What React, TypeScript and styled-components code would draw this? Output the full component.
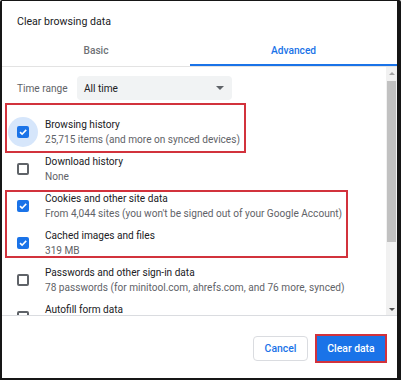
import React from 'react';
import styled, { createGlobalStyle, css } from 'styled-components';

const GlobalStyle = createGlobalStyle`
  html, body {
    margin: 0;
    padding: 0;
    background: #ffffff;
  }
  body {
    font-family: Roboto, 'Liberation Sans', Arial, sans-serif;
    color: #202124;
  }
`;

const Frame = styled.div`
  width: 401px;
  height: 380px;
  box-sizing: border-box;
  border-style: solid;
  border-color: #161616;
  border-width: 1px 4px 2px 2px;
  border-radius: 2px 2px 0 0;
  background: #ffffff;
  overflow: hidden;
`;

const Dialog = styled.div`
  display: flex;
  flex-direction: column;
  height: 100%;
`;

const Header = styled.div`
  height: 35px;
  box-sizing: border-box;
  padding: 13px 0 0 15px;
`;

const Title = styled.h1`
  margin: 0;
  font-size: 10.6px;
  line-height: 16px;
  font-weight: 400;
  color: #202124;
`;

const TabBar = styled.div`
  display: flex;
  height: 31px;
  box-sizing: border-box;
  border-bottom: 1px solid #e3e3e3;
`;

const Tab = styled.div<{ $active?: boolean; $basis?: number }>`
  display: flex;
  align-items: center;
  justify-content: center;
  padding-bottom: 1px;
  font-size: 10.2px;
  font-weight: 500;
  color: #6f7276;
  ${(p) => (p.$basis ? `flex: 0 0 ${p.$basis}px;` : 'flex: 1;')}
  ${(p) =>
    p.$active &&
    css`
      color: #1a73e8;
      box-shadow: inset 0 -2px 0 #1a73e8;
    `}
`;

const Body = styled.div`
  display: flex;
  height: 248px;
`;

const Content = styled.div`
  flex: 1;
  overflow: hidden;
`;

const RangeRow = styled.div`
  display: flex;
  align-items: center;
  padding: 9px 0 0 15px;
`;

const RangeLabel = styled.span`
  width: 60px;
  font-size: 10.1px;
  color: #5f6368;
`;

const Select = styled.div`
  display: flex;
  align-items: center;
  justify-content: space-between;
  width: 155px;
  height: 24px;
  box-sizing: border-box;
  padding: 0 8px 0 7px;
  border-radius: 4px;
  background: #f1f3f4;
  font-size: 10.1px;
  color: #202124;
`;

const Caret = styled.span`
  width: 0;
  height: 0;
  border-left: 4px solid transparent;
  border-right: 4px solid transparent;
  border-top: 4px solid #5f6368;
`;

const Group = styled.div<{ $width: number; $top: number; $bottom: number; $gap?: number }>`
  position: relative;
  margin-top: ${(p) => p.$gap ?? 0}px;
  &::after {
    content: '';
    position: absolute;
    left: 3px;
    top: ${(p) => p.$top}px;
    bottom: ${(p) => p.$bottom}px;
    width: ${(p) => p.$width}px;
    box-sizing: border-box;
    border: 2px solid #d2323c;
    pointer-events: none;
  }
`;

const Rows = styled.div<{ $gap?: number }>`
  margin-top: ${(p) => p.$gap ?? 0}px;
`;

const Row = styled.div`
  display: flex;
  align-items: center;
  height: 37px;
  padding-left: 15px;
`;

const Box = styled.span<{ $checked?: boolean; $focused?: boolean }>`
  position: relative;
  flex: 0 0 12px;
  width: 12px;
  height: 12px;
  box-sizing: border-box;
  border-radius: 2px;
  display: flex;
  align-items: center;
  justify-content: center;
  border: 2px solid #5f6368;
  ${(p) =>
    p.$checked &&
    css`
      border: none;
      background: #1a73e8;
    `}
  ${(p) =>
    p.$focused &&
    css`
      &::before {
        content: '';
        position: absolute;
        left: -9px;
        top: -9px;
        width: 30px;
        height: 30px;
        border-radius: 50%;
        background: #d6e6fb;
        z-index: -1;
      }
    `}
  svg {
    display: block;
  }
`;

const CheckArea = styled.span`
  position: relative;
  z-index: 0;
  display: flex;
`;

const Texts = styled.div`
  margin-left: 16px;
  display: flex;
  flex-direction: column;
`;

const RowTitle = styled.span`
  font-size: 10.1px;
  line-height: 15px;
  color: #202124;
  white-space: nowrap;
`;

const RowSub = styled.span`
  min-height: 15px;
  font-size: 10.1px;
  line-height: 15px;
  color: #5f6368;
  white-space: nowrap;
`;

const Scrollbar = styled.div`
  flex: 0 0 11px;
  display: flex;
  flex-direction: column;
  background: #f1f1f1;
`;

const ArrowCell = styled.div<{ $size: number }>`
  flex: 0 0 ${(p) => p.$size}px;
  display: flex;
  align-items: center;
  justify-content: center;
`;

const Arrow = styled.span<{ $down?: boolean; $muted?: boolean }>`
  width: 0;
  height: 0;
  border-left: 3px solid transparent;
  border-right: 3px solid transparent;
  ${(p) =>
    p.$down
      ? `border-top: 3px solid ${p.$muted ? '#a3a3a3' : '#505050'};`
      : `border-bottom: 3px solid ${p.$muted ? '#a3a3a3' : '#505050'};`}
`;

const Track = styled.div`
  flex: 1;
  padding: 1px 1px 0;
`;

const Thumb = styled.div`
  height: 161px;
  background: #c1c1c1;
`;

const Footer = styled.div`
  flex: 1;
  display: flex;
  justify-content: flex-end;
  align-items: flex-start;
  gap: 9px;
  padding: 20px 12px 0 0;
  border-top: 1px solid #dadce0;
`;

const Button = styled.button<{ $primary?: boolean }>`
  height: 25px;
  box-sizing: border-box;
  font-family: inherit;
  font-size: 10.4px;
  font-weight: 500;
  padding: 0;
  cursor: pointer;
  ${(p) =>
    p.$primary
      ? css`
          width: 68px;
          border: none;
          border-radius: 0;
          background: #1a73e8;
          color: #ffffff;
          box-shadow: 0 0 0 2px #d2323c;
        `
      : css`
          width: 55px;
          border: 1px solid #dadce0;
          border-radius: 4px;
          background: #ffffff;
          color: #1a73e8;
        `}
`;

type Item = { title: string; sub: string; checked: boolean; focused?: boolean };

const Check = ({ checked, focused }: { checked: boolean; focused?: boolean }) => (
  <CheckArea>
    <Box $checked={checked} $focused={focused}>
      {checked && (
        <svg width="10" height="10" viewBox="0 0 10 10">
          <path d="M2 5.2 L4.1 7.2 L8.2 2.9" fill="none" stroke="#ffffff" strokeWidth="1.6" />
        </svg>
      )}
    </Box>
  </CheckArea>
);

const DataRow = ({ item }: { item: Item }) => (
  <Row>
    <Check checked={item.checked} focused={item.focused} />
    <Texts>
      <RowTitle>{item.title}</RowTitle>
      <RowSub>{item.sub}</RowSub>
    </Texts>
  </Row>
);

const browsing: Item = {
  title: 'Browsing history',
  sub: '25,715 items (and more on synced devices)',
  checked: true,
  focused: true,
};
const download: Item = { title: 'Download history', sub: 'None', checked: false };
const cookies: Item = {
  title: 'Cookies and other site data',
  sub: "From 4,044 sites (you won't be signed out of your Google Account)",
  checked: true,
};
const cached: Item = { title: 'Cached images and files', sub: '319 MB', checked: true };
const passwords: Item = {
  title: 'Passwords and other sign-in data',
  sub: '78 passwords (for minitool.com, ahrefs.com, and 76 more, synced)',
  checked: false,
};
const autofill: Item = { title: 'Autofill form data', sub: '', checked: false };

export default function App() {
  return (
    <>
      <GlobalStyle />
      <Frame>
        <Dialog>
          <Header>
            <Title>Clear browsing data</Title>
          </Header>
          <TabBar>
            <Tab $basis={188}>Basic</Tab>
            <Tab $active>Advanced</Tab>
          </TabBar>
          <Body>
            <Content>
              <RangeRow>
                <RangeLabel>Time range</RangeLabel>
                <Select>
                  <span>All time</span>
                  <Caret />
                </Select>
              </RangeRow>
              <Group $width={241} $top={-10} $bottom={-3} $gap={13}>
                <DataRow item={browsing} />
              </Group>
              <DataRow item={download} />
              <Group $width={343} $top={3} $bottom={3}>
                <DataRow item={cookies} />
                <DataRow item={cached} />
              </Group>
              <Rows>
                <DataRow item={passwords} />
                <DataRow item={autofill} />
              </Rows>
            </Content>
            <Scrollbar>
              <ArrowCell $size={13}>
                <Arrow $muted />
              </ArrowCell>
              <Track>
                <Thumb />
              </Track>
              <ArrowCell $size={12}>
                <Arrow $down />
              </ArrowCell>
            </Scrollbar>
          </Body>
          <Footer>
            <Button>Cancel</Button>
            <Button $primary>Clear data</Button>
          </Footer>
        </Dialog>
      </Frame>
    </>
  );
}
